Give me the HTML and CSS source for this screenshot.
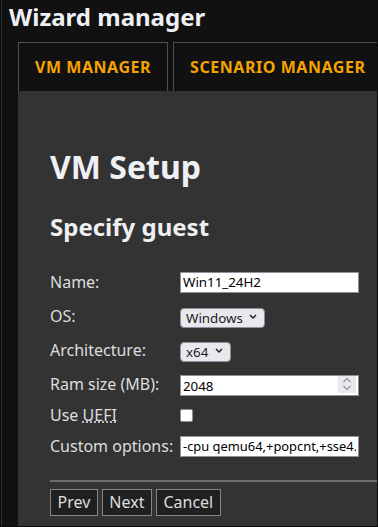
FILE: index.html
```html
<!DOCTYPE html>
<html lang="en">
<head>
  <meta charset="UTF-8" />
  <meta name="viewport" content="width=device-width, initial-scale=1.0"/>
  <title>Wizard manager</title>
  <link rel="stylesheet" href="styles.css">
</head>
<body>
  <div class="frame">
    <h1 class="app-title">Wizard manager</h1>

    <div class="tabs">
      <div class="tab">VM MANAGER</div>
      <div class="tab">SCENARIO MANAGER</div>
    </div>

    <div class="panel">
      <h2 class="page-title">VM Setup</h2>
      <h3 class="section-title">Specify guest</h3>

      <div class="form">
        <div class="row">
          <label for="vmName">Name:</label>
          <input id="vmName" type="text" class="field" value="Win11_24H2">
        </div>

        <div class="row">
          <label for="vmOs">OS:</label>
          <div class="select-wrap">
            <select id="vmOs"><option>Windows</option><option>Linux</option></select>
            <svg class="chevron" width="8" height="5" viewBox="0 0 8 5"><path d="M1 1l3 3 3-3" fill="none" stroke="#1b1b1f" stroke-width="1.4"/></svg>
          </div>
        </div>

        <div class="row">
          <label for="vmArch">Architecture:</label>
          <div class="select-wrap">
            <select id="vmArch"><option>x64</option><option>x86</option></select>
            <svg class="chevron" width="8" height="5" viewBox="0 0 8 5"><path d="M1 1l3 3 3-3" fill="none" stroke="#1b1b1f" stroke-width="1.4"/></svg>
          </div>
        </div>

        <div class="row">
          <label for="vmRam">Ram size (MB):</label>
          <div class="number-wrap">
            <input id="vmRam" type="number" class="field" value="2048">
            <span class="spinner">
              <svg width="10" height="6" viewBox="0 0 10 6"><path d="M1.5 5l3.5-3.5 3.5 3.5" fill="none" stroke="#8e8e96" stroke-width="1.1"/></svg>
              <svg width="10" height="6" viewBox="0 0 10 6"><path d="M1.5 1l3.5 3.5 3.5-3.5" fill="none" stroke="#8e8e96" stroke-width="1.1"/></svg>
            </span>
          </div>
        </div>

        <div class="row tight">
          <label for="vmUefi">Use <abbr title="Unified Extensible Firmware Interface">UEFI</abbr></label>
          <input id="vmUefi" type="checkbox" class="check">
        </div>

        <div class="row tight">
          <label for="vmOpts">Custom options:</label>
          <input id="vmOpts" type="text" class="field narrow-text" value="-cpu qemu64,+popcnt,+sse4.1,+sse4.2">
        </div>
      </div>

      <hr>

      <div class="actions">
        <button>Prev</button>
        <button>Next</button>
        <button>Cancel</button>
      </div>
    </div>
  </div>
</body>
</html>
```

FILE: styles.css
```css
html, body {
  margin: 0;
  height: 100%;
  background-color: #0b0b0b;
  font-family: "Noto Sans", "Open Sans", sans-serif;
  overflow: hidden;
}
.frame {
  margin-left: 1px;
  width: 375px;
  height: 526px;
  background-color: #111;
  border-left: 1px solid #2c3039;
  display: flex;
  flex-direction: column;
  overflow: hidden;
}
.app-title {
  margin: 0;
  padding: 0 0 0 7px;
  font-size: 24px;
  line-height: 34px;
  color: #eef0f4;
}
.tabs {
  display: flex;
  gap: 5px;
  margin-top: 8px;
  padding-left: 16px;
  white-space: nowrap;
}
.tab {
  flex-shrink: 0;
  padding: 0 16px;
  height: 48px;
  line-height: 48px;
  border: 1px solid #4f4f4f;
  border-bottom: none;
  color: #f4a300;
  font-weight: bold;
  font-size: 16px;
  letter-spacing: 0.55px;
}
.panel {
  flex: 1;
  margin-left: 16px;
  padding: 54px 0 0 32px;
  background-color: #333;
  color: #dedede;
}
.page-title {
  margin: 0;
  font-size: 32px;
  line-height: 44px;
  color: #eef0f4;
}
.section-title {
  margin: 21px 0 0;
  font-size: 24px;
  line-height: 34px;
  color: #eef0f4;
}
.form {
  margin-top: 26px;
  font-size: 16px;
}
.row {
  display: flex;
  align-items: center;
  height: 24px;
  margin-top: 10px;
}
.row.tight {
  margin-top: 7px;
}
.row label {
  width: 130px;
  flex-shrink: 0;
  line-height: 24px;
}
.field {
  box-sizing: border-box;
  width: 179px;
  height: 21px;
  margin: 0;
  padding: 0 2px;
  border: 1px solid #8f8f9d;
  background-color: #fff;
  color: #000;
  font-family: "Noto Sans", sans-serif;
  font-size: 13.33px;
  outline: none;
}
.narrow-text {
  font-size: 12.9px;
}
input[type="number"]::-webkit-inner-spin-button,
input[type="number"]::-webkit-outer-spin-button {
  -webkit-appearance: none;
  margin: 0;
}
.number-wrap {
  position: relative;
  height: 21px;
}
.spinner {
  position: absolute;
  top: 2px;
  right: 3px;
  width: 18px;
  height: 17px;
  background-color: #e9e9ed;
  display: flex;
  flex-direction: column;
  align-items: center;
  justify-content: center;
  gap: 2px;
}
.spinner svg {
  display: block;
}
.select-wrap {
  position: relative;
  height: 20px;
}
.select-wrap select {
  -webkit-appearance: none;
  appearance: none;
  box-sizing: border-box;
  height: 20px;
  margin: 0;
  padding: 0 21px 0 5px;
  border: 1px solid #8f8f9d;
  border-radius: 4px;
  background-color: #e9e9ed;
  color: #1b1b1f;
  font-family: "Noto Sans", sans-serif;
  font-size: 13.33px;
  outline: none;
}
.chevron {
  position: absolute;
  right: 8px;
  top: 8px;
  pointer-events: none;
}
.check {
  -webkit-appearance: none;
  appearance: none;
  box-sizing: border-box;
  width: 13px;
  height: 13px;
  margin: 0;
  border: 1px solid #8f8f9d;
  border-radius: 2px;
  background-color: #fff;
}
abbr {
  text-decoration: underline dotted;
}
hr {
  margin: 22px 0 7px;
  border: none;
  border-top: 2px solid #6e6e6e;
}
.actions {
  display: flex;
  gap: 4px;
}
.actions button {
  padding: 0 6.5px;
  height: 27px;
  line-height: 25px;
  background-color: #202020;
  color: #dedede;
  border: 1px solid #858585;
  font-family: "Noto Sans", sans-serif;
  font-size: 16px;
}
```
